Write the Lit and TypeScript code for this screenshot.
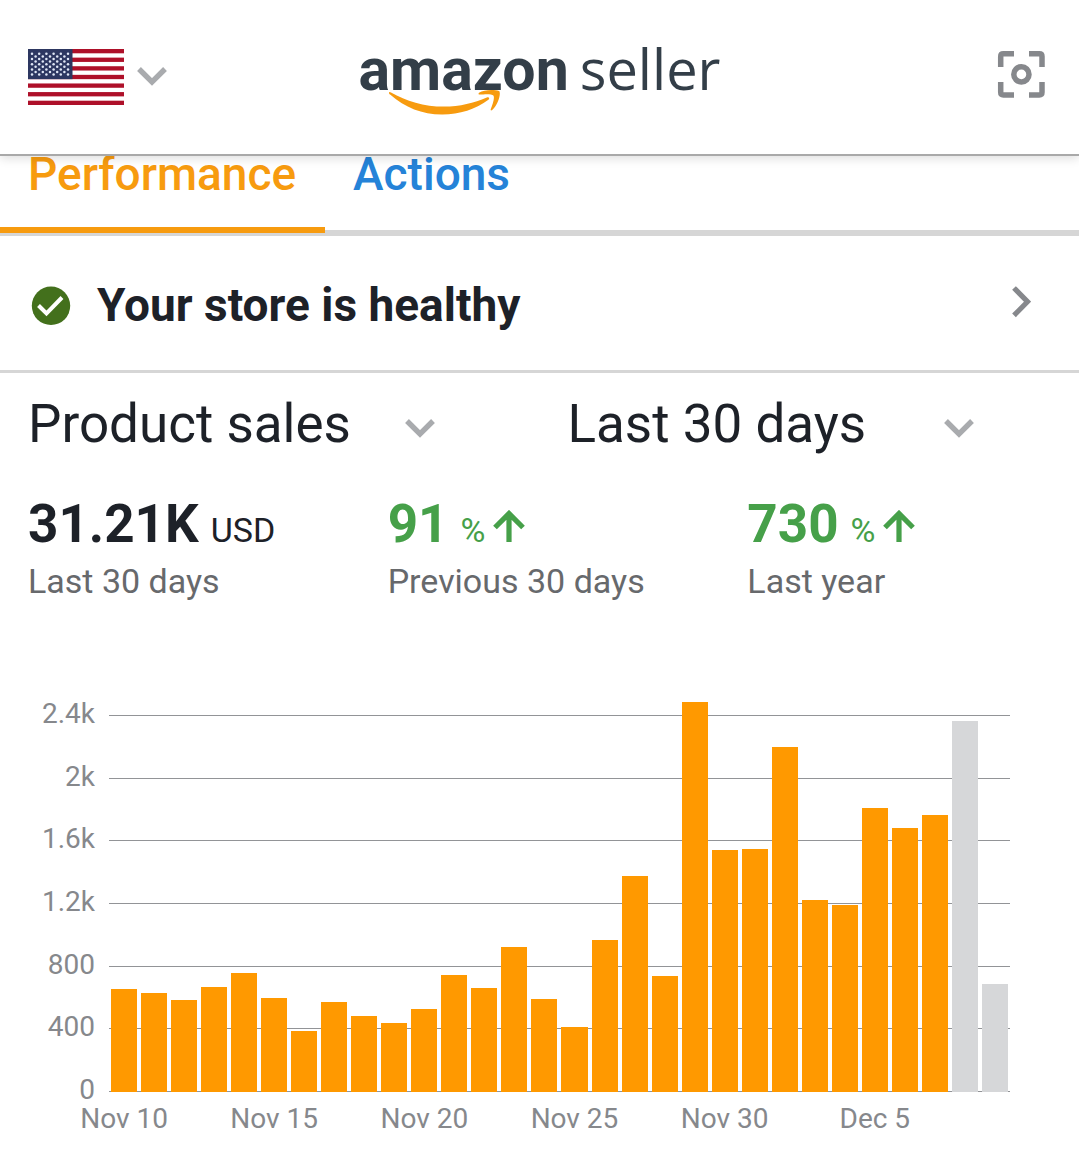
import { LitElement, html, css, svg } from "lit";
import { customElement, property, state } from "lit/decorators.js";
import { classMap } from "lit/directives/class-map.js";

interface Day {
  sales: number;
  label?: string;
  pending?: boolean;
}

const AXIS_MAX = 2400;
const AXIS_LABELS = ["2.4k", "2k", "1.6k", "1.2k", "800", "400", "0"];

const DAYS: Day[] = [
  { sales: 656, label: "Nov 10" },
  { sales: 629 },
  { sales: 587 },
  { sales: 671 },
  { sales: 755 },
  { sales: 599, label: "Nov 15" },
  { sales: 388 },
  { sales: 573 },
  { sales: 484 },
  { sales: 439 },
  { sales: 528, label: "Nov 20" },
  { sales: 748 },
  { sales: 659 },
  { sales: 924 },
  { sales: 590 },
  { sales: 413, label: "Nov 25" },
  { sales: 966 },
  { sales: 1378 },
  { sales: 736 },
  { sales: 2483 },
  { sales: 1538, label: "Nov 30" },
  { sales: 1550 },
  { sales: 2199 },
  { sales: 1221 },
  { sales: 1193 },
  { sales: 1806, label: "Dec 5" },
  { sales: 1678 },
  { sales: 1762 },
  { sales: 2363, pending: true },
  { sales: 688, pending: true },
];

const chevronDown = html`<svg class="chevron" width="30" height="20" viewBox="0 0 30 20" aria-hidden="true">
  <path d="M2 2 L15 15 L28 2" fill="none" stroke="currentColor" stroke-width="5.4" />
</svg>`;

@customElement("us-flag")
class UsFlag extends LitElement {
  static styles = css`
    :host {
      display: block;
    }
    .flag {
      display: block;
    }
  `;

  render() {
    const stars = [];
    for (let row = 0; row < 9; row++) {
      const count = row % 2 ? 5 : 6;
      for (let i = 0; i < count; i++) {
        const x = 4 + i * 7.2 + (row % 2 ? 3.6 : 0);
        stars.push(svg`<circle cx=${x} cy=${4.8 + row * 2.6} r="1.25" />`);
      }
    }
    return html`<svg class="flag" width="96" height="56" viewBox="0 0 96 56" aria-hidden="true">
      <rect width="96" height="56" fill="#fff" />
      ${[0, 1, 2, 3, 4, 5, 6].map((i) => svg`<rect y=${i * 8.615} width="96" height="4.308" fill="#ae1029" />`)}
      <rect width="44.5" height="30.15" fill="#2d3761" />
      <g fill="#dfe6f5">${stars}</g>
    </svg>`;
  }
}

@customElement("seller-logo")
class SellerLogo extends LitElement {
  static styles = css`
    :host {
      display: block;
      position: relative;
      color: #333e48;
      line-height: 80px;
    }
    .words {
      display: flex;
      align-items: baseline;
      gap: 11px;
    }
    .brand {
      font-family: Roboto, sans-serif;
      font-size: 59px;
      font-weight: 700;
    }
    .product {
      font-family: "Open Sans", sans-serif;
      font-size: 56px;
    }
    .smile {
      position: absolute;
      left: 29px;
      top: 62px;
    }
  `;

  render() {
    return html`
      <div class="words"><span class="brand">amazon</span><span class="product">seller</span></div>
      <svg class="smile" width="114" height="26" viewBox="0 0 114 26" aria-hidden="true">
        <path
          d="M1.2 2.2 C0.6 3.2 1.2 3.8 2.4 4.8 C17 17.5 34 24.5 54 24.6 C71 24.7 88 19.2 100.4 9.8 C102 8.4 101 6.6 98.8 7.5 C86 13 72 16.6 56 16.6 C36 16.6 18 11 3 2.4 C2.2 1.9 1.6 1.7 1.2 2.2 Z"
          fill="#f79b0f"
        />
        <path
          d="M91 2.8 C96 -0.4 106 -0.6 111 1 C113.4 2.4 110.5 14.5 104.2 20 C103.2 20.8 102.2 20.4 102.8 19 C104.5 14.6 107 7.8 105.4 5.6 C103.8 3.6 96 4.2 92.2 4.6 C90.8 4.7 90 3.7 91 2.8 Z"
          fill="#f79b0f"
        />
      </svg>
    `;
  }
}

@customElement("sales-chart")
class SalesChart extends LitElement {
  @property({ attribute: false }) days: Day[] = [];

  static styles = css`
    :host {
      display: grid;
      grid-template-columns: 95px 1fr;
      column-gap: 14px;
      row-gap: 1px;
      padding-right: 69px;
      color: #86888c;
      font-size: 28px;
      line-height: 28px;
    }
    .scale {
      display: flex;
      flex-direction: column;
      justify-content: space-between;
      height: 404px;
      text-align: right;
    }
    .plot {
      display: grid;
      height: 377px;
      margin-top: 15px;
    }
    .lines,
    .bars {
      grid-area: 1 / 1;
      min-height: 0;
    }
    .lines {
      display: flex;
      flex-direction: column;
      justify-content: space-between;
    }
    .line {
      height: 1px;
      background: #929497;
    }
    .bars {
      display: flex;
      align-items: flex-end;
      height: 100%;
    }
    .slot {
      display: flex;
      flex: 1;
      align-items: flex-end;
      height: 100%;
      padding: 0 2px;
    }
    .bar {
      flex: 1;
      background: #ff9900;
    }
    .pending {
      background: #d6d7d9;
    }
    .dates {
      grid-column: 2;
      display: flex;
    }
    .date {
      display: flex;
      flex: 1 1 0;
      min-width: 0;
      justify-content: center;
      white-space: nowrap;
    }
  `;

  render() {
    return html`
      <div class="scale">${AXIS_LABELS.map((text) => html`<span>${text}</span>`)}</div>
      <div class="plot">
        <div class="lines">${AXIS_LABELS.map(() => html`<div class="line"></div>`)}</div>
        <div class="bars">
          ${this.days.map(
            (day) => html`<div class="slot">
              <div
                class=${classMap({ bar: true, pending: !!day.pending })}
                style="height:${(day.sales / AXIS_MAX) * 100}%"
              ></div>
            </div>`
          )}
        </div>
      </div>
      <div class="dates">${this.days.map((day) => html`<span class="date">${day.label ?? ""}</span>`)}</div>
    `;
  }
}

@customElement("app-root")
class AppRoot extends LitElement {
  @state() private tab = "Performance";

  static styles = css`
    :host {
      display: block;
      min-height: 100vh;
      background: #fff;
      color: #1d2128;
      font-family: Roboto, "Liberation Sans", sans-serif;
    }
    button,
    select {
      margin: 0;
      padding: 0;
      border: 0;
      background: none;
      color: inherit;
      font: inherit;
      cursor: pointer;
    }
    svg {
      display: block;
      flex: none;
    }
    .header {
      position: relative;
      z-index: 1;
      display: grid;
      grid-template-columns: 1fr auto 1fr;
      align-items: center;
      height: 154px;
      padding: 0 28px;
      border-bottom: 2px solid #a9a9a9;
      background: #fff;
      box-shadow: 0 2px 10px rgba(0, 0, 0, 0.14);
    }
    .country {
      display: flex;
      align-items: center;
      justify-self: start;
      gap: 13px;
    }
    .chevron {
      color: #a9abae;
    }
    .logo {
      margin-bottom: 16px;
    }
    .scan {
      justify-self: end;
      padding: 0 6px;
      margin-bottom: 6px;
      color: #86888c;
    }
    .tabs {
      display: flex;
      align-items: flex-start;
      border-bottom: 6px solid #d6d6d6;
    }
    .tab {
      margin-bottom: -3px;
      padding: 0 29px 35px 28px;
      border-bottom: 6px solid transparent;
      color: #2583d8;
      font-size: 46px;
      font-weight: 500;
      line-height: 36px;
    }
    .tab.active {
      border-bottom-color: #f79b0f;
      color: #f79b0f;
    }
    .health {
      display: flex;
      align-items: center;
      width: 100%;
      height: 137px;
      padding: 4px 48px 0 31px;
      border-bottom: 3px solid #d6d6d6;
      text-align: left;
    }
    .message {
      flex: 1;
      padding-left: 26px;
      font-size: 46px;
      font-weight: 700;
    }
    .go {
      color: #86888c;
    }
    .filters {
      display: grid;
      grid-template-columns: 1fr 1fr;
      padding-top: 19px;
    }
    .filter {
      display: grid;
      align-items: center;
      padding: 0 105px 0 28px;
    }
    .filter > * {
      grid-area: 1 / 1;
    }
    .filter .chevron {
      justify-self: end;
      margin-top: 10px;
      pointer-events: none;
    }
    .select {
      width: 100%;
      appearance: none;
      font-size: 53px;
      line-height: 64px;
    }
    .stats {
      display: grid;
      grid-template-columns: repeat(3, 1fr);
      padding-top: 36px;
    }
    .stat {
      padding-left: 28px;
    }
    .figure {
      display: flex;
      align-items: baseline;
      gap: 12px;
    }
    .amount {
      font-size: 53px;
      font-weight: 700;
      line-height: 64px;
    }
    .unit {
      font-size: 34px;
      line-height: 40px;
    }
    .up {
      color: #46a049;
    }
    .arrow {
      margin-left: -4px;
    }
    .period {
      margin-top: 5px;
      color: #67696c;
      font-size: 34px;
      line-height: 40px;
    }
    .chart {
      margin-top: 99px;
    }
  `;

  private stat(amount: string, unit: string, period: string, up: boolean) {
    return html`<div class="stat">
      <div class=${classMap({ figure: true, up })}>
        <span class="amount">${amount}</span>
        <span class="unit">${unit}</span>
        ${up
          ? html`<svg class="arrow" width="32" height="32" viewBox="0 0 32 32" role="img" aria-label="up">
              <path d="M16 32 V4 M2 17.5 L16 3.5 L30 17.5" fill="none" stroke="currentColor" stroke-width="5.2" />
            </svg>`
          : ""}
      </div>
      <div class="period">${period}</div>
    </div>`;
  }

  render() {
    return html`
      <header class="header">
        <button class="country" aria-label="Country: United States">
          <us-flag></us-flag>
          ${chevronDown}
        </button>
        <seller-logo class="logo"></seller-logo>
        <button class="scan" aria-label="Scan">
          <svg width="48" height="48" viewBox="0 0 48 48" fill="none" stroke="currentColor" stroke-width="5.5" aria-hidden="true">
            <path
              d="M3.7 17 V6.4 Q3.7 3.7 6.4 3.7 H17 M32 3.7 H42.3 Q45 3.7 45 6.4 V17 M45 32 V42.3 Q45 45 42.3 45 H32 M17 45 H6.4 Q3.7 45 3.7 42.3 V32"
            />
            <circle cx="24.4" cy="24.4" r="7.6" />
          </svg>
        </button>
      </header>

      <nav class="tabs" role="tablist">
        ${["Performance", "Actions"].map(
          (name) => html`<button
            class=${classMap({ tab: true, active: this.tab === name })}
            role="tab"
            aria-selected=${this.tab === name}
            @click=${() => (this.tab = name)}
          >${name}</button>`
        )}
      </nav>

      <button class="health">
        <svg width="40" height="40" viewBox="0 0 40 40" aria-hidden="true">
          <circle cx="20" cy="20.8" r="19.2" fill="#43701c" />
          <path d="M7.5 20.5 L15.5 28.5 L31 12.5" fill="none" stroke="#fff" stroke-width="4" />
        </svg>
        <span class="message">Your store is healthy</span>
        <svg class="go" width="20" height="40" viewBox="0 0 20 40" aria-hidden="true">
          <path d="M3 3 L16.5 16.7 L3 30.4" fill="none" stroke="currentColor" stroke-width="5.2" />
        </svg>
      </button>

      <div class="filters">
        <div class="filter">
          <select class="select" aria-label="Metric">
            <option>Product sales</option>
          </select>
          ${chevronDown}
        </div>
        <div class="filter">
          <select class="select" aria-label="Period">
            <option>Last 30 days</option>
          </select>
          ${chevronDown}
        </div>
      </div>

      <section class="stats">
        ${this.stat("31.21K", "USD", "Last 30 days", false)}
        ${this.stat("91", "%", "Previous 30 days", true)}
        ${this.stat("730", "%", "Last year", true)}
      </section>

      <sales-chart class="chart" .days=${DAYS}></sales-chart>
    `;
  }
}
